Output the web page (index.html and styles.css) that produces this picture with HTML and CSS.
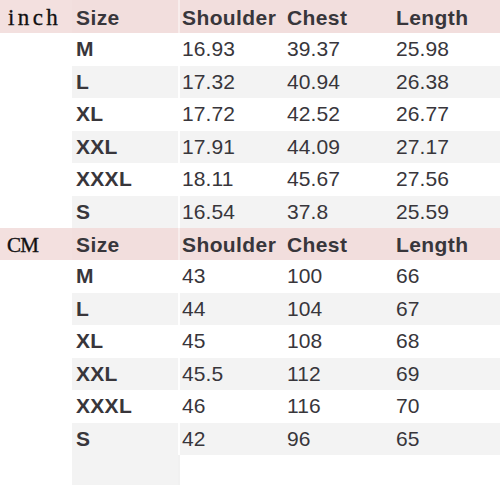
FILE: index.html
```html
<!DOCTYPE html>
<html>
<head>
<meta charset="utf-8">
<link rel="stylesheet" href="styles.css">
</head>
<body>
<div class="chart">
  <div class="row head first">
    <div class="label inch">inch</div>
    <div class="cell">Size</div>
    <div class="cell sh">Shoulder</div>
    <div class="cell">Chest</div>
    <div class="cell">Length</div>
  </div>
  <div class="row"><div class="label"></div><div class="cell b">M</div><div class="cell sh">16.93</div><div class="cell">39.37</div><div class="cell">25.98</div></div>
  <div class="row alt"><div class="label"></div><div class="cell b">L</div><div class="cell sh">17.32</div><div class="cell">40.94</div><div class="cell">26.38</div></div>
  <div class="row"><div class="label"></div><div class="cell b">XL</div><div class="cell sh">17.72</div><div class="cell">42.52</div><div class="cell">26.77</div></div>
  <div class="row alt"><div class="label"></div><div class="cell b">XXL</div><div class="cell sh">17.91</div><div class="cell">44.09</div><div class="cell">27.17</div></div>
  <div class="row"><div class="label"></div><div class="cell b">XXXL</div><div class="cell sh">18.11</div><div class="cell">45.67</div><div class="cell">27.56</div></div>
  <div class="row alt"><div class="label"></div><div class="cell b">S</div><div class="cell sh">16.54</div><div class="cell">37.8</div><div class="cell">25.59</div></div>

  <div class="row head second">
    <div class="label cm">CM</div>
    <div class="cell">Size</div>
    <div class="cell sh">Shoulder</div>
    <div class="cell">Chest</div>
    <div class="cell">Length</div>
  </div>
  <div class="row"><div class="label"></div><div class="cell b">M</div><div class="cell sh">43</div><div class="cell">100</div><div class="cell">66</div></div>
  <div class="row alt"><div class="label"></div><div class="cell b">L</div><div class="cell sh">44</div><div class="cell">104</div><div class="cell">67</div></div>
  <div class="row"><div class="label"></div><div class="cell b">XL</div><div class="cell sh">45</div><div class="cell">108</div><div class="cell">68</div></div>
  <div class="row alt"><div class="label"></div><div class="cell b">XXL</div><div class="cell sh">45.5</div><div class="cell">112</div><div class="cell">69</div></div>
  <div class="row"><div class="label"></div><div class="cell b">XXXL</div><div class="cell sh">46</div><div class="cell">116</div><div class="cell">70</div></div>
  <div class="row alt"><div class="label"></div><div class="cell b">S</div><div class="cell sh">42</div><div class="cell">96</div><div class="cell">65</div></div>
  <div class="row tail"><div class="label"></div><div class="cell fill"></div><div class="cell sh"></div><div class="cell"></div><div class="cell"></div></div>
</div>
</body>
</html>
```

FILE: styles.css
```css
html, body {
  margin: 0;
  padding: 0;
  background: #ffffff;
}

.chart {
  width: 500px;
  font-family: "Liberation Sans", Arial, sans-serif;
  color: #38363b;
}

.row {
  display: grid;
  grid-template-columns: 72px 106px 105px 109px 1fr;
  height: 32.5px;
}

.cell {
  display: flex;
  align-items: center;
  padding-left: 4px;
  font-size: 21px;
  box-sizing: border-box;
  letter-spacing: 0.1px;
}

.cell.sh {
  border-left: 2px solid rgba(255, 255, 255, 0.85);
  padding-left: 2px;
}

.cell.b {
  font-weight: bold;
  letter-spacing: 0.3px;
}

.row.alt .cell {
  background: #f3f3f3;
}

.row.head {
  background: #f2dedd;
}

.row.head .cell {
  font-weight: bold;
  letter-spacing: 0.4px;
  padding-top: 2px;
}

.row.head.first {
  height: 33px;
}

.row.head.second {
  height: 32px;
}

.row.head .cell.sh {
  border-left-color: rgba(255, 255, 255, 0.45);
}

.label {
  display: flex;
  align-items: center;
  font-family: "Liberation Serif", "Times New Roman", serif;
  color: #111011;
}

.label.inch {
  background: #f3e0df;
  font-size: 23px;
  letter-spacing: 3.4px;
  padding-left: 8px;
  padding-top: 3px;
  -webkit-text-stroke: 0.3px #111011;
}

.label.cm {
  background: #f3e0df;
  font-size: 21px;
  letter-spacing: -0.8px;
  padding-left: 7px;
  padding-top: 3px;
  -webkit-text-stroke: 0.4px #111011;
}

.row.tail {
  height: 30px;
}

.row.tail .cell.fill {
  background: #f3f3f3;
}

.row.tail .cell.sh {
  border-left-color: #f1f1f1;
}
```
